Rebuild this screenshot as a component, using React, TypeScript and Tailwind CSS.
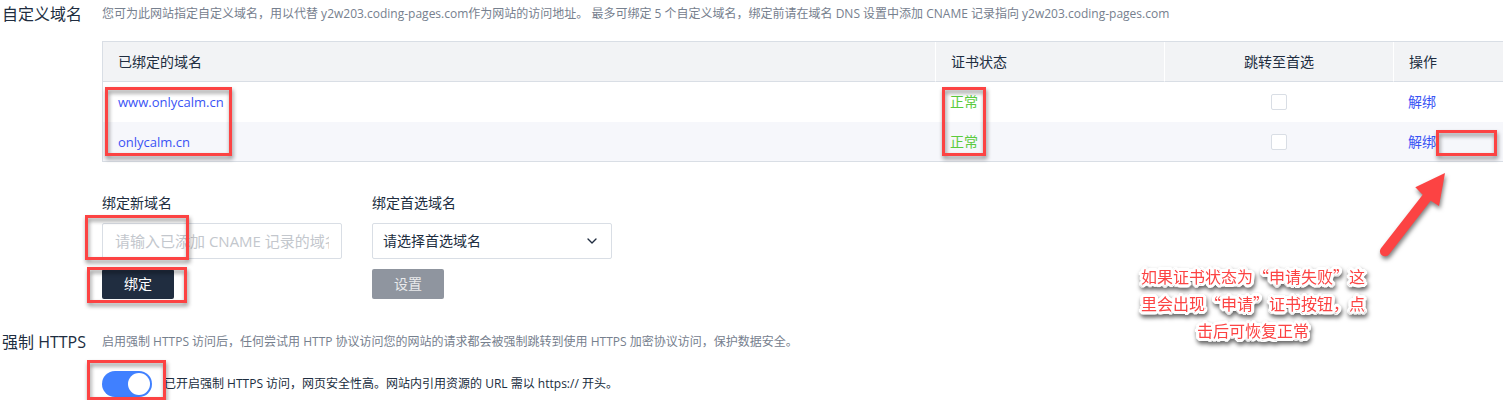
import type { ReactNode } from "react";
import { ChevronDown } from "lucide-react";

const domains = ["www.onlycalm.cn", "onlycalm.cn"];

function Mark({ className }: { className: string }) {
  return (
    <span
      aria-hidden="true"
      className={`pointer-events-none absolute z-10 border-3 border-[#fc4343] drop-shadow-[1px_3px_2px_rgba(0,0,0,0.45)] ${className}`}
    />
  );
}

function Section({ title, hint, children }: { title: ReactNode; hint: string; children: ReactNode }) {
  return (
    <section className="flex">
      <h2 className="w-[102px] shrink-0 pl-[2px] text-base leading-7 whitespace-nowrap text-[#202d40]">{title}</h2>
      <div className="min-w-0 flex-1">
        <p className="text-xs leading-7 text-[#76808e]">{hint}</p>
        {children}
      </div>
    </section>
  );
}

function Callout() {
  return (
    <div className="pointer-events-none absolute top-[170px] right-0 z-10 w-[370px]">
      <svg
        aria-hidden="true"
        viewBox="0 0 80 90"
        className="ml-[242px] block h-[90px] w-[80px] overflow-visible drop-shadow-[1px_3px_2px_rgba(0,0,0,0.5)]"
      >
        <path d="M70 3 L40.3 17.3 L47.7 24.7 L6 78.2 A5 5 0 0 0 14 84.4 L55.7 30.7 L64 36 Z" fill="#fc4343" />
      </svg>
      <p className="mt-[3px] w-60 text-center font-['Noto_Sans_CJK_SC',sans-serif] text-base leading-[27px] text-[#fc4343] drop-shadow-[1px_3px_2px_rgba(0,0,0,0.6)] [text-shadow:3px_0_white,-3px_0_white,0_3px_white,0_-3px_white,2px_2px_white,-2px_2px_white,2px_-2px_white,-2px_-2px_white,3px_1px_white,-3px_1px_white,3px_-1px_white,-3px_-1px_white,1px_3px_white,-1px_3px_white,1px_-3px_white,-1px_-3px_white,1px_0_white,-1px_0_white,0_1px_white,0_-1px_white]">
        如果证书状态为“申请失败”这
        <br />
        里会出现“申请”证书按钮，点
        <br />
        击后可恢复正常
      </p>
    </div>
  );
}

export default function App() {
  return (
    <main className="relative overflow-hidden bg-white font-['Open_Sans','Noto_Sans_CJK_SC',sans-serif] text-sm text-[#202d40]">
      <Section
        title="自定义域名"
        hint="您可为此网站指定自定义域名，用以代替 y2w203.coding-pages.com作为网站的访问地址。 最多可绑定 5 个自定义域名，绑定前请在域名 DNS 设置中添加 CNAME 记录指向 y2w203.coding-pages.com"
      >
        <table className="mt-[13px] w-full table-fixed border-separate border-spacing-0 border-y border-l border-[#d9dee5]">
          <thead className="bg-[#f2f3f5] text-left">
            <tr className="h-10 *:border-b *:border-b-[#d9dee5] *:px-[15px] *:py-0 *:font-normal">
              <th scope="col" className="border-r border-r-white">已绑定的域名</th>
              <th scope="col" className="w-[229px] border-r border-r-white">证书状态</th>
              <th scope="col" className="w-[229px] border-r border-r-white text-center">跳转至首选</th>
              <th scope="col" className="w-[109px]">操作</th>
            </tr>
          </thead>
          <tbody>
            {domains.map((domain, i) => (
              <tr key={domain} className="h-10 even:h-[39px] even:bg-[#f6f7fb] *:px-[14px] *:py-0">
                <td className="relative">
                  <a href={`https://${domain}`} className="ml-px text-[13px] text-[#3a53f5]">{domain}</a>
                  {i === 0 && <Mark className="top-[5px] left-[2px] h-[69px] w-[127px]" />}
                </td>
                <td className="relative text-[#5bcb3e]">
                  正常
                  {i === 0 && <Mark className="top-[5px] left-[6px] h-[69px] w-[44px]" />}
                </td>
                <td className="border-r border-transparent">
                  <input
                    type="checkbox"
                    aria-label={`跳转至首选 ${domain}`}
                    className="mx-auto block size-4 appearance-none rounded-xs border border-[#d9dee5] bg-white checked:bg-[#4080ff]"
                  />
                </td>
                <td className="relative">
                  <button type="button" className="text-[#3a53f5]">解绑</button>
                  {i === 1 && <Mark className="top-2 right-[6px] h-[26px] w-[61px]" />}
                </td>
              </tr>
            ))}
          </tbody>
        </table>

        <div className="mt-[31px] flex gap-[30px]">
          <form className="relative w-60">
            <label htmlFor="domain" className="block leading-5">绑定新域名</label>
            <input
              id="domain"
              placeholder="请输入已添加 CNAME 记录的域名"
              className="mt-[10px] block h-9 w-full rounded-xs border border-[#d9dee5] px-3 text-[15px] placeholder:text-[#c3c7cd]"
            />
            <button type="button" className="mt-[10px] block h-[30px] w-[72px] rounded-xs bg-[#202d40] text-white">绑定</button>
            <Mark className="top-[22px] -left-[17px] h-[45px] w-[104px]" />
            <Mark className="top-[74px] -left-[15px] h-[36px] w-[100px]" />
          </form>
          <form className="w-60">
            <label htmlFor="preferred" className="block leading-5">绑定首选域名</label>
            <div className="relative mt-[10px]">
              <select id="preferred" className="block h-9 w-full appearance-none rounded-xs border border-[#d9dee5] bg-white px-[10px]">
                <option>请选择首选域名</option>
                {domains.map((domain) => (
                  <option key={domain}>{domain}</option>
                ))}
              </select>
              <ChevronDown className="pointer-events-none absolute top-[10px] right-3 size-4" />
            </div>
            <button type="button" className="mt-[10px] block h-[30px] w-[72px] rounded-xs bg-[#8f959f] text-[#e9eaec]">设置</button>
          </form>
        </div>
      </Section>

      <div className="mt-[29px]">
        <Section
          title={<>强制 <span className="font-medium">HTTPS</span></>}
          hint="启用强制 HTTPS 访问后，任何尝试用 HTTP 协议访问您的网站的请求都会被强制跳转到使用 HTTPS 加密协议访问，保护数据安全。"
        >
          <label className="relative mt-[15px] mb-[3px] flex items-center gap-3 text-xs">
            <input
              type="checkbox"
              role="switch"
              defaultChecked
              className="flex h-[26px] w-[50px] shrink-0 appearance-none items-center rounded-full bg-[#c3c7cd] p-[2px] before:block before:size-[22px] before:rounded-full before:bg-white checked:justify-end checked:bg-[#4080ff]"
            />
            <span>已开启强制 HTTPS 访问，网页安全性高。网站内引用资源的 URL 需以 https:// 开头。</span>
            <Mark className="-top-[11px] -left-[15px] h-10 w-[79px]" />
          </label>
        </Section>
      </div>
      <Callout />
    </main>
  );
}
